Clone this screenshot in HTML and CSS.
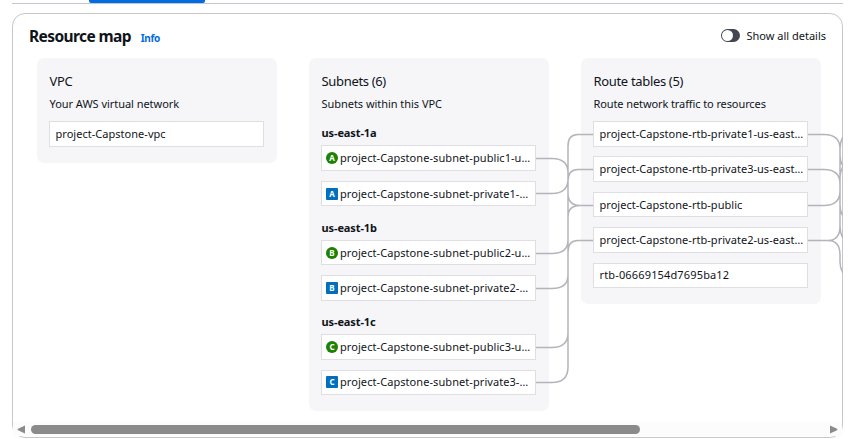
FILE: index.html
```
<!DOCTYPE html>
<html lang="en">
<head>
<meta charset="utf-8">
<title>Resource map</title>
<link rel="stylesheet" href="styles.css">
</head>
<body>
<div class="tabs"><div class="tab-active"></div></div>
<section class="panel">
  <header class="head">
    <h1>Resource map</h1><a class="info">Info</a>
    <div class="toggle"><span class="switch"></span><span>Show all details</span></div>
  </header>
  <div class="map">
    <div class="col">
      <h2 class="vpc-title">VPC</h2><p>Your AWS virtual network</p>
      <div class="items"><div class="item">project-Capstone-vpc</div></div>
    </div>
    <div class="col">
      <h2>Subnets (6)</h2><p>Subnets within this VPC</p>
      <h3>us-east-1a</h3>
      <div class="items zone"><div class="item sub"><i class="pub">A</i>project-Capstone-subnet-public1-u…</div><div class="item sub"><i>A</i>project-Capstone-subnet-private1-…</div></div>
      <h3>us-east-1b</h3>
      <div class="items zone"><div class="item sub"><i class="pub">B</i>project-Capstone-subnet-public2-u…</div><div class="item sub"><i>B</i>project-Capstone-subnet-private2-…</div></div>
      <h3>us-east-1c</h3>
      <div class="items zone"><div class="item sub"><i class="pub">C</i>project-Capstone-subnet-public3-u…</div><div class="item sub"><i>C</i>project-Capstone-subnet-private3-…</div></div>
    </div>
    <div class="col">
      <h2>Route tables (5)</h2><p class="route-desc">Route network traffic to resources</p>
      <div class="items"><div class="item">project-Capstone-rtb-private1-us-east…</div><div class="item">project-Capstone-rtb-private3-us-east…</div><div class="item">project-Capstone-rtb-public</div><div class="item">project-Capstone-rtb-private2-us-east…</div><div class="item id">rtb-06669154d7695ba12</div></div>
    </div>
  </div>
  <svg class="links" viewBox="0 0 843 420" width="843" height="420">
    <path d="M536 158.5H552Q568 158.5 568 173V193Q568 205.5 580 205.5H593M536 193.5H552Q568 193.5 568 179V146Q568 134.500 578 134.500H593M536 253.500H552Q568 253.500 568 240V217Q568 205.500 580 205.500M536 288.500H552Q568 288.500 568 275V252Q568 240.500 578 240.500H593M536 347.500H552Q568 347.500 568 333V217M536 382.500H552Q568 382.500 568 367V181Q568 169.500 578 169.500H593"/>
    <path d="M808 134.500H824Q840 134.500 840 149V226Q840 240.500 828 240.500M808 169.500H824Q840 169.500 840 184V226M808 205.500H824Q840 205.500 840 191V149Q840 142 843 137M808 240.500H828Q840 240.500 840 255V262Q840 268 843 273M840 155Q840 162 843 166M840 178Q840 172 843 166M840 205Q840 212 843 216M840 226Q840 233 843 238"/>
  </svg>
</section>
<div class="scroll">
  <svg width="9" height="9" viewBox="0 0 9 9"><path d="M8 .5v8L1 5.200Q0 4.500 1 3.800Z"/></svg>
  <div class="track"><div class="thumb"></div></div>
  <svg width="9" height="9" viewBox="0 0 9 9"><path d="M1 .5v8L8 5.200Q9 4.500 8 3.800Z"/></svg>
</div>
</body>
</html>
```
FILE: styles.css
```
* { box-sizing: border-box; }
body { margin: 0; width: 861px; height: 439px; overflow: hidden; position: relative; background: #fff; color: #0f141a; font: 11px/16px "Noto Sans", sans-serif; }
.tabs { margin-left: 12px; width: 831px; height: 4px; border-bottom: 1px solid #c6c6cd; }
.tab-active { margin-left: 77px; width: 116px; height: 3px; background: #006ce0; border-radius: 0 0 2px 2px; }
.panel { margin: 9px 0 0 12px; width: 831px; height: 425px; border: 1px solid #c6c6cd; border-radius: 13px; }
.head { display: flex; align-items: center; height: 44px; padding: 0 16px; }
h1, h2, h3, p { margin: 0; white-space: nowrap; }
h1 { font-size: 15.500px; line-height: 20px; font-weight: 700; letter-spacing: -.6px; }
.info { margin: 3px 0 0 10px; font-size: 10px; font-weight: 700; letter-spacing: -.5px; letter-spacing: -.4px; color: #006ce0; }
.toggle { margin-left: auto; display: flex; align-items: center; gap: 6px; }
.toggle { margin-top: -1px; }
.switch { width: 19px; height: 13px; border-radius: 7px; background: #424650; padding: 1px; }
.switch::before { content: ""; display: block; width: 11px; height: 11px; border-radius: 50%; background: #fff; }
.map { display: flex; align-items: flex-start; gap: 32px; padding-left: 24px; width: 829px; }
.col { flex: none; width: 240px; background: #f6f6f9; border-radius: 7px; padding: 14px 13px 16px 12px; }
h2 { font-size: 13px; line-height: 19px; font-weight: 400; padding-left: .5px; letter-spacing: -.33px; }
p { margin-top: 5px; padding-left: .5px; letter-spacing: -.04px; }
.route-desc { letter-spacing: -.1px; }
.items { display: grid; gap: 9.800px; margin-top: 9px; }
.item { height: 25.600px; border: 1px solid #dedee3; background: #fff; padding: 0 0 0 5.500px; display: flex; align-items: center; white-space: nowrap; position: relative; z-index: 1; letter-spacing: .03px; }
.item.sub { padding-left: 4px; letter-spacing: .07px; }
.item.id { letter-spacing: .15px; }
.item i { font: 700 8px/12px "Noto Sans", sans-serif; width: 12px; height: 12px; text-align: center; color: #fff; background: #0070bd; border-radius: 1px; margin-right: 2px; }
.item .pub { background: #1d8102; border-radius: 50%; }
h3 { font-size: 11px; line-height: 16px; padding-left: .5px; margin-top: 13.400px; letter-spacing: -.1px; }
.zone { margin-top: 4px; }
.links { position: absolute; left: 0; top: 0; }
.links path { fill: none; stroke: #b4b4bb; stroke-width: 1.500; }
.scroll { position: absolute; left: 13px; top: 422px; width: 829px; height: 14px; display: flex; align-items: center; justify-content: space-between; padding: 1px 4px 0; background: #fcfcfc; }
.scroll path { fill: #8b8b8b; }
.track { flex: 1; padding-left: 5px; }
.thumb { width: 609px; height: 9px; border-radius: 5px; background: #8b8b8b; }
```
